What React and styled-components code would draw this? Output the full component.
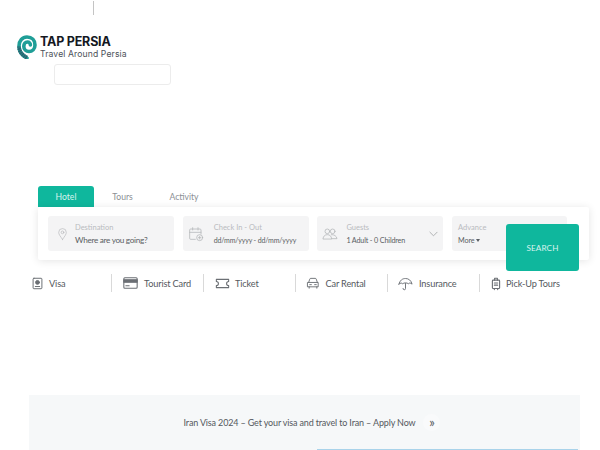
import React from "react";
import styled, { createGlobalStyle } from "styled-components";

const Global = createGlobalStyle`
  html, body { margin: 0; padding: 0; background: #fff; overflow: hidden; }
  body { width: 600px; height: 450px; font-family: Lato, "Liberation Sans", sans-serif; }
`;
const Page = styled.div`
  width: 600px; height: 450px; overflow: hidden; display: flex; flex-direction: column;
`;
const TopRule = styled.div`
  width: 1px; height: 14px; margin: 1px 0 0 93px; background: #c4c4c4; flex: none;
`;
const Logo = styled.div`
  display: flex; align-items: flex-start; gap: 3px; margin: 20px 0 0 17px; height: 24px; flex: none;
`;
const LogoText = styled.div`
  display: flex; flex-direction: column; font-family: Inter, sans-serif;
`;
const LogoName = styled.span`
  font-size: 12.5px; font-weight: 700; line-height: 13px; color: #14181f; letter-spacing: -0.2px;
`;
const LogoTag = styled.span`
  font-size: 8.6px; line-height: 10px; margin-top: 0.5px; color: #4c5158; letter-spacing: 0.12px;
`;
const EmptyBox = styled.div`
  width: 115px; height: 19px; margin: 5px 0 0 54px; border: 1px solid #ececec; border-radius: 3px; box-sizing: content-box; flex: none;
`;
const Search = styled.div`
  margin: 101px 0 0 38px; width: 551px; flex: none;
`;
const Tabs = styled.div`
  display: flex; height: 21px;
`;
const Tab = styled.div`
  width: ${p => p.$w}px; display: flex; align-items: center; justify-content: center;
  font-size: 8.6px; color: ${p => (p.$active ? "#d8f3ee" : "#8b8f94")};
  background: ${p => (p.$active ? "#0fb79d" : "transparent")};
  border-radius: 3px 3px 0 0;
`;
const Panel = styled.div`
  position: relative; height: 53px; background: #fff; border-radius: 2px;
  box-shadow: 0 1px 8px rgba(0,0,0,.11); display: flex; gap: 8.7px; padding: 9px 0 0 10px; box-sizing: border-box;
`;
const Field = styled.div`
  width: ${p => p.$w}px; height: 35px; background: #f4f4f5; border-radius: 3px; display: flex; align-items: center; flex: none; position: relative;
`;
const FieldIcon = styled.div`
  width: ${p => p.$w}px; padding-left: ${p => p.$pad}px; box-sizing: border-box; display: flex; align-items: center; flex: none; color: #b5b7ba;
`;
const FieldText = styled.div`
  display: flex; flex-direction: column; gap: 2px; padding-top: 1px;
`;
const FieldLabel = styled.span`
  font-size: 7.5px; line-height: 10px; color: #b9bbbf;
`;
const FieldValue = styled.span`
  font-size: ${p => p.$size}px; letter-spacing: ${p => p.$track}px; line-height: 11px; color: #5a5e63; white-space: nowrap;
`;
const Caret = styled.span`
  display: inline-block; margin-left: 1.500px; vertical-align: 1px; width: 0; height: 0;
  border: 2.500px solid transparent; border-top: 3px solid #5a5e63; border-bottom: 0;
`;
const Chevron = styled.div`
  position: absolute; right: 5px; top: 15px; color: #a9abae; display: flex;
`;
const SearchButton = styled.button`
  position: absolute; left: 468px; top: 17px; width: 73px; height: 47px; border: 0; border-radius: 3px;
  background: #0fb79d; color: #d8f3ee; font: 400 8.2px Lato, sans-serif; letter-spacing: 0.1px; padding: 0;
`;
const Services = styled.div`
  display: flex; margin: 14px 0 0 20px; flex: none;
`;
const Service = styled.div`
  width: 92px; height: 18px; box-sizing: border-box; display: flex; align-items: center; gap: ${p => p.$gap}px;
  padding-left: ${p => p.$pad}px; border-right: ${p => (p.$last ? "0" : "1px solid #d9d9d9")};
  font-size: 9.2px; letter-spacing: -0.15px; color: #55595e; white-space: nowrap;
  svg { color: #6b6f74; flex: none; }
`;
const Banner = styled.div`
  position: relative; margin: 103px 0 0 29px; width: 551px; height: 55px; background: #f6f8f9; flex: none;
  display: flex; align-items: center; justify-content: center; padding: 0 0 1px 15px; box-sizing: border-box;
  font-size: 9px; letter-spacing: -0.15px; color: #55595e; gap: 8px;
`;
const Round = styled.span`
  width: 17px; height: 17px; border-radius: 50%; background: #f9fafb; display: flex; align-items: center; justify-content: center;
  color: #55595e; font-size: 13px; line-height: 14px;
`;
const Strip = styled.div`
  position: absolute; left: 288px; right: 2px; bottom: 0; height: 1px; background: #a9d3ea;
`;

const Svg = ({ w = 14, h = 14, vb = "0 0 24 24", sw = 1.5, children }) => (
  <svg width={w} height={h} viewBox={vb} fill="none" stroke="currentColor" strokeWidth={sw} strokeLinecap="round" strokeLinejoin="round">{children}</svg>
);

const Mark = () => (
  <svg width="20" height="24" viewBox="0 0 20 24" fill="none">
    <path d="M10 23 C5 20.500 2 16 2 11 C2 5.500 5.500 2 10 2 C15 2 18 5.500 18 10 C18 14 15.200 16.500 12 16.500 C9 16.500 6.800 14.200 6.800 11.200 C6.800 8.800 8.400 7 10.400 7 C12.300 7 13.400 8.400 13.400 10" stroke="#1f9e97" strokeWidth="3.600" strokeLinecap="round" />
    <path d="M10 22.500 C5 20 2 16 2 11.500" stroke="#2b6370" strokeWidth="3.800" strokeDasharray="1.700 .5" />
  </svg>
);

export default function App() {
  return (
    <Page>
      <Global />
      <TopRule />
      <Logo>
        <Mark />
        <LogoText>
          <LogoName>TAP PERSIA</LogoName>
          <LogoTag>Travel Around Persia</LogoTag>
        </LogoText>
      </Logo>
      <EmptyBox />
      <Search>
        <Tabs>
          <Tab $active $w={56}>Hotel</Tab>
          <Tab $w={57}>Tours</Tab>
          <Tab $w={66}>Activity</Tab>
        </Tabs>
        <Panel>
          <Field $w={126}>
            <FieldIcon $w={27} $pad={8}>
              <Svg w={13} h={16} sw={1.2}><path d="M12 22 C8 16 5 13 5 9 a7 7 0 0 1 14 0 C19 13 16 16 12 22 Z" /><circle cx="12" cy="9" r="2.500" /></Svg>
            </FieldIcon>
            <FieldText>
              <FieldLabel>Destination</FieldLabel>
              <FieldValue $size={8.2} $track={-0.3}>Where are you going?</FieldValue>
            </FieldText>
          </Field>
          <Field $w={126}>
            <FieldIcon $w={31} $pad={5}>
              <Svg w={16} h={16} sw={1.2}><path d="M11 20 H4 a1.500 1.500 0 0 1-1.500-1.500 V6 A1.500 1.500 0 0 1 4 4.500 H18 a1.500 1.500 0 0 1 1.500 1.500 V12 M2.500 9.500 H19.500 M7 2.500 V6 M15 2.500 V6" /><circle cx="17.500" cy="17.500" r="4.500" /><path d="M17.500 15.500 V19.500 M15.500 17.500 H19.500" /></Svg>
            </FieldIcon>
            <FieldText>
              <FieldLabel>Check In - Out</FieldLabel>
              <FieldValue $size={7} $track={-0.15}>dd/mm/yyyy - dd/mm/yyyy</FieldValue>
            </FieldText>
          </Field>
          <Field $w={126}>
            <FieldIcon $w={29} $pad={5}>
              <Svg w={16} h={16} sw={1.2}><circle cx="8" cy="8" r="3.500" /><circle cx="16" cy="8" r="3.500" /><path d="M1.500 19 C2 15 4.500 13 8 13 C11.500 13 14 15 14.500 19 Z M14 13 C18 12.500 22 15 22.500 19 H15" /></Svg>
            </FieldIcon>
            <FieldText>
              <FieldLabel>Guests</FieldLabel>
              <FieldValue $size={7.2} $track={-0.15}>1 Adult - 0 Children</FieldValue>
            </FieldText>
            <Chevron>
              <Svg w={9} h={6} vb="0 0 10 6" sw={1}><path d="M1 1 L5 5 L9 1" /></Svg>
            </Chevron>
          </Field>
          <Field $w={115}>
            <FieldIcon $w={6} $pad={0} />
            <FieldText>
              <FieldLabel>Advance</FieldLabel>
              <FieldValue $size={7.2} $track={-0.1}>More<Caret /></FieldValue>
            </FieldText>
          </Field>
          <SearchButton>SEARCH</SearchButton>
        </Panel>
      </Search>
      <Services>
        <Service $pad={12} $gap={6}>
          <Svg w={11} h={13} vb="0 0 20 22" sw={1.8}><rect x="2" y="1.500" width="16" height="19" rx="1.500" /><circle cx="10" cy="9" r="3.500" fill="currentColor" /><path d="M6 16.500 H14" /></Svg>
          Visa
        </Service>
        <Service $pad={11} $gap={6}>
          <Svg w={15} h={12} vb="0 0 22 18" sw={1.6}><rect x="1" y="1" width="20" height="16" rx="1.500" /><rect x="1" y="4" width="20" height="4" fill="currentColor" /><path d="M4 13 H9" /></Svg>
          Tourist Card
        </Service>
        <Service $pad={10.5} $gap={5.5}>
          <Svg w={15} h={11} vb="0 0 22 16" sw={1.6}><path d="M2 2 H20 V5 A3 3 0 0 0 20 11 V14 H2 V11 A3 3 0 0 0 2 5 Z" /></Svg>
          Ticket
        </Service>
        <Service $pad={10} $gap={5.5}>
          <Svg w={14} h={12} vb="0 0 24 22" sw={1.7}><path d="M4 10 L6 4 a2 2 0 0 1 2-1.500 H16 a2 2 0 0 1 2 1.500 L20 10 M2.500 10 H21.500 V18 H2.500 Z M5 18 V20.500 M19 18 V20.500 M6 14 H9 M15 14 H18" /></Svg>
          Car Rental
        </Service>
        <Service $pad={10} $gap={6}>
          <Svg w={15} h={15} sw={1.5}><path d="M1.500 13 C3 7 7 4 12 4 C17 4 21 7 22.500 13 C20 10.500 17.500 11 16.500 12.500 C15 10.500 9 10.500 7.500 12.500 C6.500 11 4 10.500 1.500 13 Z M12 12 V20 a2 2 0 0 1-4 0" /></Svg>
          Insurance
        </Service>
        <Service $pad={10.5} $gap={5.5} $last>
          <Svg w={10} h={15} vb="0 0 18 24" sw={2}><rect x="2.500" y="6" width="13" height="15" rx="1.500" /><path d="M6.500 6 V2.500 H11.500 V6 M6 11 H12 M6 15 H12 M6 21 V23 M12 21 V23" /></Svg>
          Pick-Up Tours
        </Service>
      </Services>
      <Banner>
        Iran Visa 2024 – Get your visa and travel to Iran – Apply Now
        <Round>»</Round>
        <Strip />
      </Banner>
    </Page>
  );
}
